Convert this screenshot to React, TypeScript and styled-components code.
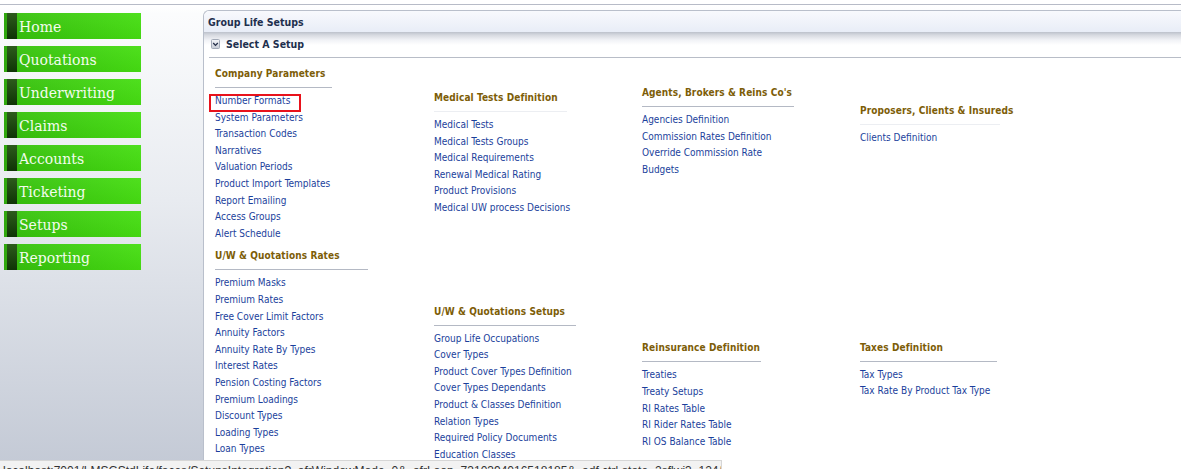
import React from "react";
import styled, { createGlobalStyle } from "styled-components";

const GlobalStyle = createGlobalStyle`
  *, *::before, *::after { box-sizing: border-box; }
  html, body { margin: 0; padding: 0; height: 100%; overflow: hidden; }
  body {
    background: linear-gradient(to bottom, #ffffff 0px, #ffffff 5px, #fbfcfd 14px, #e8ebf0 200px, #c3c9d5 100%);
    font-family: "DejaVu Sans Condensed", "Liberation Sans", sans-serif;
  }
  #root { height: 100%; }
`;

const Page = styled.div`
  height: 100%;
  display: flex;
  flex-direction: column;
`;

const TopRule = styled.div`
  flex: none;
  height: 5px;
  background: #fff;
  border-bottom: 1px solid #b7bbc7;
`;

const Body = styled.div`
  flex: 1;
  display: flex;
  min-height: 0;
`;

const Sidebar = styled.nav`
  flex: none;
  width: 203px;
  padding: 8px 0 0 4px;
  display: flex;
  flex-direction: column;
  gap: 7px;
`;

const NavButton = styled.a`
  display: flex;
  width: 137px;
  height: 26px;
  text-decoration: none;
  background: linear-gradient(rgba(255, 255, 255, 0.05), rgba(0, 0, 0, 0.04)),
    linear-gradient(to right, #35bf0c, #46de12);
`;

const NavStrip = styled.span`
  flex: none;
  width: 13px;
  border-left: 3px solid #30a80e;
  background: linear-gradient(#2d5c1c, #0f3406);
`;

const NavLabel = styled.span`
  padding: 1px 0 0 2px;
  font: 14px/26px "DejaVu Serif", "Liberation Serif", serif;
  color: #f3fcee;
  white-space: nowrap;
`;

const Panel = styled.main`
  flex: 1;
  min-width: 0;
  margin-top: 5px;
  background: #fff;
  border-top: 1px solid #b9bfcb;
  border-left: 1px solid #b9bfcb;
  border-top-left-radius: 6px;
  display: flex;
  flex-direction: column;
`;

const PanelHeader = styled.h1`
  margin: 0;
  height: 21px;
  padding: 1px 0 0 4px;
  font: bold 10.5px/21px "DejaVu Sans Condensed", "Liberation Sans", sans-serif;
  color: #1e2f4e;
  background: linear-gradient(#f8f9fd, #e8edf7);
  border-top-left-radius: 6px;
`;

const SetupBar = styled.div`
  background: linear-gradient(#bcc1cb 0px, #d6d9e0 3px, #f1f2f6 8px, #ffffff 13px);
`;

const SetupRow = styled.div`
  margin-left: 5px;
  height: 26px;
  padding: 0 0 1px 2px;
  display: flex;
  align-items: center;
  gap: 6px;
  border-bottom: 1px solid #b8bdc7;
  font: bold 10.5px/14px "DejaVu Sans Condensed", "Liberation Sans", sans-serif;
  color: #1e2f4e;
`;

const Content = styled.div`
  padding: 9px 0 0 11px;
  display: grid;
  grid-template-columns: 219px 208px 218px 1fr;
  align-items: start;
`;

const Column = styled.div`
  display: flex;
  flex-direction: column;
`;

const Section = styled.section<{ $mt: number }>`
  margin-top: ${(p) => p.$mt}px;
`;

const Heading = styled.h3<{ $w: number; $light?: boolean }>`
  margin: 0;
  width: ${(p) => p.$w}px;
  padding-bottom: 6px;
  border-bottom: 1px solid ${(p) => (p.$light ? "#eceef2" : "#b4b9c4")};
  font: bold 10px/14px "DejaVu Sans Condensed", "Liberation Sans", sans-serif;
  letter-spacing: 0.1px;
  color: #7d5d07;
  white-space: nowrap;
`;

const LinkList = styled.div`
  padding-top: 5px;
  display: flex;
  flex-direction: column;
`;

const Link = styled.a<{ $marked?: boolean }>`
  position: relative;
  display: block;
  height: 16.6px;
  font: 10px/16.6px "DejaVu Sans Condensed", "Liberation Sans", sans-serif;
  color: #1b3f9c;
  text-decoration: none;
  white-space: nowrap;
  &::after {
    content: "";
    display: ${(p) => (p.$marked ? "block" : "none")};
    position: absolute;
    left: -6px;
    top: 1px;
    width: 92px;
    height: 18px;
    border: 2px solid #e8121b;
  }
`;

const StatusBar = styled.div`
  position: fixed;
  left: 0;
  top: 460px;
  width: 722px;
  height: 22px;
  padding: 3px 3px 0;
  overflow: hidden;
  background: #f2f2f2;
  border-top: 1px solid #d6d6d6;
  border-right: 1px solid #d6d6d6;
  font: 12px/14px "Liberation Sans", sans-serif;
  color: #333;
  white-space: nowrap;
`;

const ChevronBox = () => (
  <svg width="9" height="10" viewBox="0 0 9 10">
    <defs>
      <linearGradient id="chev" x1="0" y1="0" x2="0" y2="1">
        <stop offset="0" stopColor="#f6f7fa" />
        <stop offset="1" stopColor="#c6cbd5" />
      </linearGradient>
    </defs>
    <rect x="0.5" y="0.5" width="8" height="9" rx="1" fill="url(#chev)" stroke="#a3aab8" />
    <path d="M2.2 4 L4.5 6.4 L6.8 4" fill="none" stroke="#27314a" strokeWidth="1.3" />
  </svg>
);

type SectionData = {
  title: string;
  mt: number;
  w: number;
  light?: boolean;
  items: string[];
};

const navItems = ["Home", "Quotations", "Underwriting", "Claims", "Accounts", "Ticketing", "Setups", "Reporting"];

const columns: SectionData[][] = [
  [
    {
      title: "Company Parameters",
      mt: 0,
      w: 117,
      items: [
        "Number Formats",
        "System Parameters",
        "Transaction Codes",
        "Narratives",
        "Valuation Periods",
        "Product Import Templates",
        "Report Emailing",
        "Access Groups",
        "Alert Schedule",
      ],
    },
    {
      title: "U/W & Quotations Rates",
      mt: 7,
      w: 153,
      items: [
        "Premium Masks",
        "Premium Rates",
        "Free Cover Limit Factors",
        "Annuity Factors",
        "Annuity Rate By Types",
        "Interest Rates",
        "Pension Costing Factors",
        "Premium Loadings",
        "Discount Types",
        "Loading Types",
        "Loan Types",
      ],
    },
  ],
  [
    {
      title: "Medical Tests Definition",
      mt: 24,
      w: 133,
      light: true,
      items: [
        "Medical Tests",
        "Medical Tests Groups",
        "Medical Requirements",
        "Renewal Medical Rating",
        "Product Provisions",
        "Medical UW process Decisions",
      ],
    },
    {
      title: "U/W & Quotations Setups",
      mt: 88,
      w: 142,
      items: [
        "Group Life Occupations",
        "Cover Types",
        "Product Cover Types Definition",
        "Cover Types Dependants",
        "Product & Classes Definition",
        "Relation Types",
        "Required Policy Documents",
        "Education Classes",
      ],
    },
  ],
  [
    {
      title: "Agents, Brokers & Reins Co's",
      mt: 19,
      w: 152,
      items: ["Agencies Definition", "Commission Rates Definition", "Override Commission Rate", "Budgets"],
    },
    {
      title: "Reinsurance Definition",
      mt: 163,
      w: 119,
      items: ["Treaties", "Treaty Setups", "RI Rates Table", "RI Rider Rates Table", "RI OS Balance Table"],
    },
  ],
  [
    {
      title: "Proposers, Clients & Insureds",
      mt: 37,
      w: 140,
      light: true,
      items: ["Clients Definition"],
    },
    {
      title: "Taxes Definition",
      mt: 194,
      w: 137,
      items: ["Tax Types", "Tax Rate By Product Tax Type"],
    },
  ],
];

export default function App() {
  return (
    <Page>
      <GlobalStyle />
      <TopRule />
      <Body>
        <Sidebar>
          {navItems.map((item) => (
            <NavButton key={item} href="#">
              <NavStrip />
              <NavLabel>{item}</NavLabel>
            </NavButton>
          ))}
        </Sidebar>
        <Panel>
          <PanelHeader>Group Life Setups</PanelHeader>
          <SetupBar>
            <SetupRow>
              <ChevronBox />
              <span>Select A Setup</span>
            </SetupRow>
          </SetupBar>
          <Content>
            {columns.map((col, ci) => (
              <Column key={ci}>
                {col.map((sec) => (
                  <Section key={sec.title} $mt={sec.mt}>
                    <Heading $w={sec.w} $light={sec.light}>
                      {sec.title}
                    </Heading>
                    <LinkList>
                      {sec.items.map((it) => (
                        <Link key={it} href="#" $marked={it === "Number Formats"}>
                          {it}
                        </Link>
                      ))}
                    </LinkList>
                  </Section>
                ))}
              </Column>
            ))}
          </Content>
        </Panel>
      </Body>
      <StatusBar>
        localhost:7001/LMSGStdLife/faces/SetupsIntegration?_afrWindowMode=0&amp;_afrLoop=7310394016518185&amp;_adf.ctrl-state=2sflwi3_124#
      </StatusBar>
    </Page>
  );
}
